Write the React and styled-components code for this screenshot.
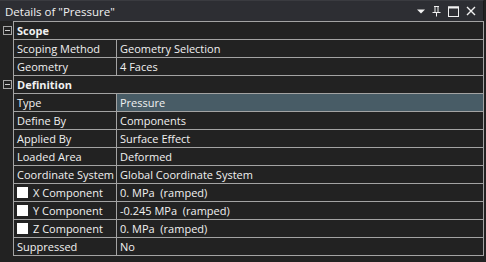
import React from 'react';
import styled, {createGlobalStyle} from 'styled-components';

const GlobalStyle = createGlobalStyle`
    html, body {
      margin: 0;
      padding: 0;
      background: #222222;
    }
    body {
      font-family: "Open Sans", "Noto Sans", sans-serif;
      color: #f1f1f1;
    }
`

const Panel = styled.div`
    width: 484px;
    height: 262px;
    background: #222222;
    overflow: hidden;
`

const TitleBar = styled.div`
    display: flex;
    align-items: center;
    height: 20px;
    border-top: 1px solid #3a3b40;
    background: #2d2e33;
    padding-left: 5px;
    padding-right: 7px;
    border-right: 1px solid #1a1a1a;
`

const Title = styled.span`
    font-size: 11.5px;
    color: #f1f1f1;
    white-space: nowrap;
`

const Grip = styled.div`
    flex: 1;
    height: 4px;
    margin: 0 5px 0 6px;
    background-image: radial-gradient(circle, #4a4b50 0.6px, transparent 0.7px);
    background-size: 2px 2px;
`

const Icons = styled.div`
    display: flex;
    align-items: center;
    gap: 7px;
`

const Body = styled.div`
    display: flex;
`

const Gutter = styled.div`
    width: 13px;
    flex-shrink: 0;
    padding-top: 1px;
`

const Toggle = styled.div`
    height: 18px;
    display: flex;
    align-items: center;
    padding-left: 3px;
    padding-bottom: 1px;
    box-sizing: border-box;
`

const ToggleBox = styled.div`
    width: 7px;
    height: 7px;
    border: 1px solid #a6a6a6;
    position: relative;

    &:after{
      content: '';
      position: absolute;
      left: 1px;
      right: 1px;
      top: 3px;
      height: 1px;
      background: #d0d0d0;
    }
`

const Table = styled.div`
    width: 470px;
    border-top: 1px solid #a3a3a3;
    border-left: 1px solid #a3a3a3;
    font-size: 11px;
`

const Row = styled.div`
    display: grid;
    grid-template-columns: ${props => props.header ? '1fr' : '103px 1fr'};
    height: 17px;
    border-bottom: 1px solid #a3a3a3;
    border-right: 1px solid #a3a3a3;
`

const Cell = styled.div`
    display: flex;
    align-items: center;
    gap: 5px;
    padding-left: 3px;
    background: ${props => props.selected ? '#485c66' : 'transparent'};
    border-right: ${props => props.name ? '1px solid #a3a3a3' : 'none'};
    font-weight: ${props => props.bold ? 700 : 400};
    white-space: pre;
    overflow: hidden;
`

const Check = styled.span`
    width: 11px;
    height: 11px;
    background: #ffffff;
    flex-shrink: 0;
`

const rows = [
    {header: 'Scope'},
    {name: 'Scoping Method', value: 'Geometry Selection'},
    {name: 'Geometry', value: '4 Faces'},
    {header: 'Definition'},
    {name: 'Type', value: 'Pressure', selected: true},
    {name: 'Define By', value: 'Components'},
    {name: 'Applied By', value: 'Surface Effect'},
    {name: 'Loaded Area', value: 'Deformed'},
    {name: 'Coordinate System', value: 'Global Coordinate System'},
    {name: 'X Component', value: '0. MPa  (ramped)', check: true},
    {name: 'Y Component', value: '-0.245 MPa  (ramped)', check: true},
    {name: 'Z Component', value: '0. MPa  (ramped)', check: true},
    {name: 'Suppressed', value: 'No'},
];

const DropIcon = () => (
    <svg width="8" height="5" viewBox="0 0 8 5">
        <path d="M0 0.5 H8 L4 4.5 Z" fill="#f1f1f1"/>
    </svg>
);

const PinIcon = () => (
    <svg width="9" height="12" viewBox="0 0 9 12">
        <path d="M2 1.5 H7 M3 1.5 V7.5 M6 1.5 V7.5 M0.5 7.5 H8.5 M4.5 7.5 V11.5" stroke="#f1f1f1" strokeWidth="1" fill="none"/>
    </svg>
);

const MaxIcon = () => (
    <svg width="11" height="11" viewBox="0 0 11 11">
        <rect x="0.5" y="1" width="10" height="9.5" stroke="#f1f1f1" strokeWidth="1" fill="none"/>
        <path d="M0 1.5 H11" stroke="#f1f1f1" strokeWidth="2"/>
    </svg>
);

const CloseIcon = () => (
    <svg width="10" height="10" viewBox="0 0 10 10">
        <path d="M1 1 L9 9 M9 1 L1 9" stroke="#f1f1f1" strokeWidth="1.4"/>
    </svg>
);

const App = () => {
    return (
        <Panel>
            <GlobalStyle/>
            <TitleBar>
                <Title>Details of "Pressure"</Title>
                <Grip/>
                <Icons>
                    <DropIcon/>
                    <PinIcon/>
                    <MaxIcon/>
                    <CloseIcon/>
                </Icons>
            </TitleBar>
            <Body>
                <Gutter>
                    {rows.map((r, i) => (
                        <Toggle key={'t' + i}>
                            {r.header && <ToggleBox/>}
                        </Toggle>
                    ))}
                </Gutter>
                <Table>
                    {rows.map((r, i) => r.header ? (
                        <Row header key={'r' + i}>
                            <Cell bold>{r.header}</Cell>
                        </Row>
                    ) : (
                        <Row key={'r' + i}>
                            <Cell name>
                                {r.check && <Check/>}
                                {r.name}
                            </Cell>
                            <Cell value selected={r.selected}>{r.value}</Cell>
                        </Row>
                    ))}
                </Table>
            </Body>
        </Panel>
    );
};

export default App;
